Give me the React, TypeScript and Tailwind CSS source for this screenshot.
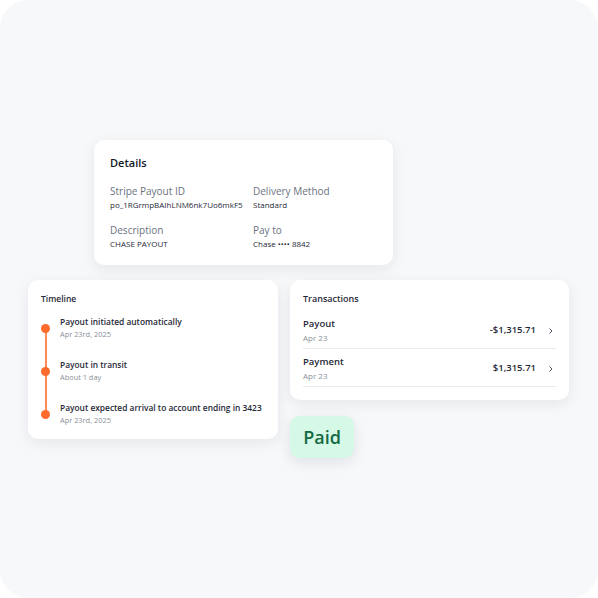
import React from "react";

const font = { fontFamily: '"Open Sans", "Noto Sans", sans-serif' };

function Field({ label, value }: { label: string; value: string }) {
  return (
    <div className="flex flex-col">
      <div className="text-[10px] leading-[14px] text-[#6b7280]">{label}</div>
      <div className="mt-[1px] text-[8px] leading-[12px] text-[#1f2937] font-medium">{value}</div>
    </div>
  );
}

function TimelineItem({ title, sub, last }: { title: string; sub: string; last?: boolean }) {
  return (
    <div className="flex">
      <div className="relative w-[19px] flex justify-start">
        <div className="mt-[7.5px] w-[9px] h-[9px] rounded-full bg-[#ff6b2c] z-10" />
        {!last && (
          <div className="absolute left-[3.5px] top-[12px] w-[2px] h-[44px] bg-[#ff8a55]" />
        )}
      </div>
      <div className="flex flex-col">
        <div className="text-[8.4px] leading-[12px] font-semibold text-[#1f2937]">{title}</div>
        <div className="text-[7.4px] leading-[12px] text-[#8a8f98]">{sub}</div>
      </div>
    </div>
  );
}

function TxRow({ title, date, amount }: { title: string; date: string; amount: string }) {
  return (
    <div className="flex items-center h-[38px] border-b border-[#e9eaee]">
      <div className="flex flex-col flex-1">
        <div className="text-[9.5px] leading-[13px] font-semibold text-[#1f2937]">{title}</div>
        <div className="mt-[2px] text-[8px] leading-[11px] text-[#8a8f98]">{date}</div>
      </div>
      <div className="mt-[2px] text-[9.5px] font-semibold text-[#1f2937]">{amount}</div>
      <svg className="ml-[12px] mr-[2px] mt-[2px]" width="6" height="8" viewBox="0 0 6 8">
        <path d="M1.5 1.5 L4 4 L1.5 6.5" fill="none" stroke="#4b5563" strokeWidth="1" />
      </svg>
    </div>
  );
}

export default function App() {
  return (
    <div className="w-[598px] h-[598px] bg-white" style={font}>
      <div className="w-[598px] h-[598px] rounded-[28px] bg-[#f7f8fa] flex flex-col pt-[140px]">
        <div className="ml-[94px] w-[299px] h-[125px] bg-white rounded-[10px] shadow-[0_4px_14px_rgba(16,24,40,0.08)] pl-[16px] pt-[15px]">
          <div className="text-[11px] leading-[15px] font-semibold text-[#111827]">Details</div>
          <div className="mt-[14px] grid grid-cols-[143px_1fr] gap-y-[12px]">
            <Field label="Stripe Payout ID" value="po_1RGrmpBAIhLNM6nk7Uo6mkF5" />
            <Field label="Delivery Method" value="Standard" />
            <Field label="Description" value="CHASE PAYOUT" />
            <Field label="Pay to" value="Chase •••• 8842" />
          </div>
        </div>
        <div className="mt-[15px] flex">
          <div className="ml-[28px] w-[250px] h-[159px] bg-white rounded-[10px] shadow-[0_4px_14px_rgba(16,24,40,0.08)] pl-[13px] pt-[13px]">
            <div className="text-[8.5px] leading-[12px] font-semibold text-[#1f2937]">Timeline</div>
            <div className="mt-[11px] flex flex-col gap-[19px]">
              <TimelineItem title="Payout initiated automatically" sub="Apr 23rd, 2025" />
              <TimelineItem title="Payout in transit" sub="About 1 day" />
              <TimelineItem title="Payout expected arrival to account ending in 3423" sub="Apr 23rd, 2025" last />
            </div>
          </div>
          <div className="ml-[12px] flex flex-col">
            <div className="w-[279px] h-[120px] bg-white rounded-[10px] shadow-[0_4px_14px_rgba(16,24,40,0.08)] pl-[13px] pr-[13px] pt-[13px]">
              <div className="text-[9px] leading-[12px] font-semibold text-[#1f2937]">Transactions</div>
              <div className="mt-[6px] flex flex-col">
                <TxRow title="Payout" date="Apr 23" amount="-$1,315.71" />
                <TxRow title="Payment" date="Apr 23" amount="$1,315.71" />
              </div>
            </div>
            <div className="mt-[16px] w-[64px] h-[42px] rounded-[9px] bg-[#d6f8e6] shadow-[0_4px_14px_rgba(16,24,40,0.10)] flex items-center justify-center">
              <span className="text-[18px] font-semibold text-[#136b45]">Paid</span>
            </div>
          </div>
        </div>
      </div>
    </div>
  );
}
